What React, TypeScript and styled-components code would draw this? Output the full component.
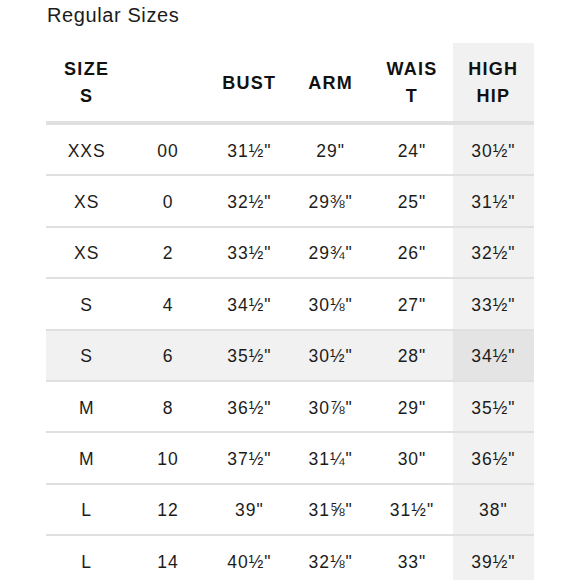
import React from 'react'
import styled, { createGlobalStyle } from 'styled-components'

const GlobalStyle = createGlobalStyle`
  html, body {
    margin: 0;
    padding: 0;
    background: #ffffff;
  }
  body {
    font-family: "Liberation Sans", Arial, sans-serif;
    color: #1c1c1c;
  }
`

type Row = string[]

const rows: Row[] = [
  ['XXS', '00', '31½"', '29"', '24"', '30½"'],
  ['XS', '0', '32½"', '29⅜"', '25"', '31½"'],
  ['XS', '2', '33½"', '29¾"', '26"', '32½"'],
  ['S', '4', '34½"', '30⅛"', '27"', '33½"'],
  ['S', '6', '35½"', '30½"', '28"', '34½"'],
  ['M', '8', '36½"', '30⅞"', '29"', '35½"'],
  ['M', '10', '37½"', '31¼"', '30"', '36½"'],
  ['L', '12', '39"', '31⅝"', '31½"', '38"'],
  ['L', '14', '40½"', '32⅛"', '33"', '39½"'],
]

const headers = [['SIZE', 'S'], [''], ['BUST'], ['ARM'], ['WAIS', 'T'], ['HIGH', 'HIP']]

const App = () => {
  return (
    <Page>
      <GlobalStyle />
      <Title>Regular Sizes</Title>
      <Table>
        <HeadRow>
          {headers.map((h, i) => (
            <HeadCell key={i} $hi={i === 5}>
              {h.map((line, j) => (
                <span key={j}>{line}</span>
              ))}
            </HeadCell>
          ))}
        </HeadRow>
        {rows.map((r, i) => (
          <BodyRow key={i} $active={i === 4}>
            {r.map((v, j) => (
              <Cell key={j} $hi={j === 5} $active={i === 4}>
                {v}
              </Cell>
            ))}
          </BodyRow>
        ))}
      </Table>
    </Page>
  )
}

export default App

const Page = styled.div`
  width: 580px;
  height: 580px;
  overflow: hidden;
  padding-left: 46px;
  box-sizing: border-box;
`

const Title = styled.h1`
  margin: 0;
  padding: 3px 0 0 1px;
  height: 40px;
  box-sizing: border-box;
  font-size: 20px;
  font-weight: 400;
  letter-spacing: 0.6px;
  line-height: 24px;
  color: #1c1c1c;
`

const Table = styled.div`
  width: 488px;
  display: flex;
  flex-direction: column;
  margin-top: 3px;
`

const HeadRow = styled.div`
  display: grid;
  grid-template-columns: repeat(6, 1fr);
  height: 82px;
  box-sizing: border-box;
  border-bottom: 4px solid #e0e0e0;
`

const HeadCell = styled.div<{ $hi?: boolean }>`
  display: flex;
  flex-direction: column;
  align-items: center;
  justify-content: center;
  background: ${p => (p.$hi ? '#f1f1f1' : 'transparent')};
  font-size: 18px;
  font-weight: 700;
  letter-spacing: 1.3px;
  line-height: 27px;
  color: #111;
  padding-top: 2px;
`

const BodyRow = styled.div<{ $active?: boolean }>`
  display: grid;
  grid-template-columns: repeat(6, 1fr);
  height: 51.4px;
  flex-shrink: 0;
  box-sizing: border-box;
  border-bottom: 2px solid #e0e0e0;
  background: ${p => (p.$active ? '#f1f1f1' : 'transparent')};
`

const Cell = styled.div<{ $hi?: boolean; $active?: boolean }>`
  display: flex;
  align-items: center;
  justify-content: center;
  padding-top: 3px;
  font-size: 17.5px;
  letter-spacing: 1px;
  color: #1c1c1c;
  background: ${p => (p.$hi ? (p.$active ? '#e4e4e4' : '#f1f1f1') : 'transparent')};
`
